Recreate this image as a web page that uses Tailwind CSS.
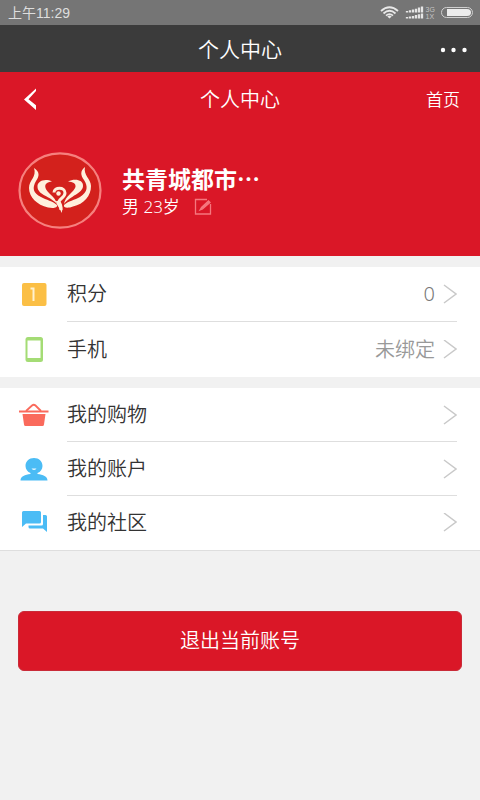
<!DOCTYPE html>
<html lang="zh-CN">
<head>
<meta charset="utf-8">
<meta name="viewport" content="width=device-width, initial-scale=1">
<title>个人中心</title>
<script src="https://cdn.jsdelivr.net/npm/@tailwindcss/browser@4"></script>
</head>
<body class="min-h-screen bg-[#f1f1f1] font-['Noto_Sans','Noto_Sans_CJK_SC',sans-serif] text-[#333]">
<div class="flex h-[25px] items-center justify-between bg-[#757575] pl-2 pr-[6px] text-[#dedede]">
  <span class="font-['Liberation_Sans','Noto_Sans_CJK_SC',sans-serif] text-sm leading-5">上午11:29</span>
  <svg class="h-4 w-[94px]" viewBox="380 5 94 16" fill="none" role="img" aria-label="Wi-Fi 3G 1X">
    <g stroke="#e8e8e8" stroke-width="1.800">
      <path d="M381 11Q389.500 3.500 398 11M383.500 13.500Q389.500 8 395.500 13.500M386 15.700Q389.500 12.500 393 15.700"/>
    </g>
    <path d="M387.300 16.500Q389.500 14.600 391.700 16.500L389.500 18.500Z" fill="#e8e8e8"/>
    <g stroke="#e6e6e6" stroke-width="2.300">
      <path d="M407 12.500V11M410 12.500V10.300M413 12.500V9.500M416 12.500V8.700M419 12.500V7.500M422 12.500V6.500M407 18.500V17M410 18.500V16.500M413 18.500V16M416 18.500V15M419 18.500V14.200M422 18.500V13.500"/>
    </g>
    <g fill="#c4c4c4" font-family="Liberation Sans, sans-serif" font-size="7"><text x="425.500" y="12">3G</text><text x="425.500" y="18.500">1X</text></g>
    <rect x="441.500" y="7.500" width="31" height="10" rx="5" stroke="#d0d0d0"/>
    <path d="M447 9H467Q471 9 471 12.500T467 16H447Z" fill="#ececec"/>
  </svg>
</div>
<header class="relative flex h-[47px] items-center justify-center bg-[#3b3b3b] text-white">
  <h1 class="text-[21px] font-[350] leading-8">个人中心</h1>
  <button type="button" aria-label="更多" class="absolute right-3 top-0 flex h-full items-center">
    <svg class="h-2 w-[28px]" viewBox="0 0 28 8" fill="#fff"><circle cx="3" cy="5" r="2.200"/><circle cx="13.500" cy="5" r="2.200"/><circle cx="24.500" cy="5" r="2.200"/></svg>
  </button>
</header>
<section class="bg-[#da1727] pb-[27px] text-white">
  <nav class="grid h-14 grid-cols-[1fr_auto_1fr] items-center px-5 font-[350]">
    <a href="#" aria-label="返回" class="justify-self-start">
      <svg class="h-6 w-5" viewBox="0 0 20 24" fill="#fff"><path d="M16 0.500L4 11.500L16 22V17.300L8.500 11.300L16 3Z"/></svg>
    </a>
    <h2 class="text-xl leading-8">个人中心</h2>
    <a href="#" class="justify-self-end text-[17px] leading-8">首页</a>
  </nav>
  <div class="flex items-center gap-5 pl-[18px] pt-6">
    <svg class="h-[77px] w-[84px] shrink-0" viewBox="0 0 84 77" role="img" aria-label="头像">
      <ellipse cx="42" cy="38.500" rx="40.500" ry="37.200" fill="#d3211c" stroke="#f6807e" stroke-width="2.200"/>
      <g fill="#fff0dc">
        <path d="M16 16C22 20 21.500 24 18 29C14 36 15 41 23 45C28 48 35 49 39 53C40 56 35 56.500 30 55.500C19 53 11 45 11 36C11 28 19 25 16 16Z"/>
        <path d="M67 15C62 19 62.500 23 66 28C70 34 70 40 62 45C57 48 50 49 46 53C45 56 50 56.500 55 54.500C66 52 73 44 73 34C73 27 65 23 67 15Z"/>
        <path d="M34 29.500C27 26 19 29 19.500 35C20 43 32 44 39 52C37 44 29 41 27.500 36C26.500 32 29 30 34 29.500Z"/>
        <path d="M50 29.500C57 26 65.500 28 65 34C65 41 52 44 46 52C47 44 56 40 57.500 35C58 31 55 30 50 29.500Z"/>
      </g>
      <path d="M36 40.500C36 35 47 34.500 47 41C47 46 40 47 41 50.500C42 53 43 55 43 58" fill="none" stroke="#fff0dc" stroke-width="3"/>
      <path d="M38 49C39 55 42 55 43.500 61C45 57 45 53 42 49Z" fill="#fff0dc"/>
      <circle cx="40.500" cy="41.500" r="2.200" fill="#fff0dc"/>
    </svg>
    <div>
      <p class="w-[138px] text-[23px] font-bold leading-8 whitespace-nowrap">共青城都市<span class="font-['Noto_Sans_CJK_SC']">⋯</span></p>
      <div class="flex items-center gap-[14px] text-[17px] leading-6 font-[350]">
        <span>男 23岁</span>
        <button type="button" aria-label="编辑资料">
          <svg class="block h-[18px] w-[18px]" viewBox="0 0 18 18" fill="none" stroke="#f5777e" stroke-width="1.300"><path d="M13 1.500H1.500V16H16.500V6"/><path d="M6 12L7.500 9.500L14.500 3L16 4.500L8.500 11Z" fill="#f5777e"/></svg>
        </button>
      </div>
    </div>
  </div>
</section>
<main class="pt-[11px]">
  <ul class="bg-white pl-5 pr-[23px] text-xl font-[350]">
    <li><a href="#" class="flex h-[55px] items-center">
      <svg class="h-7 w-7 shrink-0" viewBox="0 0 28 28"><rect x="2" y="2" width="24.500" height="23" rx="2" fill="#fbbf45"/><path d="M10.500 7.500H13.500V20" fill="none" stroke="#fff2cf" stroke-width="2"/></svg>
      <span class="ml-[19px] flex h-full flex-1 items-center border-b border-[#dedede]"><span class="flex-1">积分</span><span class="mr-2 text-[#777]">0</span><svg class="h-5 w-[14px]" viewBox="0 0 14 20" fill="none" stroke="#c9c9c9" stroke-width="1.500"><path d="M1 1L13 10L1 19"/></svg></span>
    </a></li>
    <li><a href="#" class="flex h-[55px] items-center">
      <svg class="h-7 w-7 shrink-0" viewBox="0 0 28 28"><rect x="5.500" y="1" width="17.500" height="25" rx="2.500" fill="#a4dc75"/><rect x="7.500" y="4.500" width="13" height="17.500" fill="#fff"/></svg>
      <span class="ml-[19px] flex h-full flex-1 items-center"><span class="flex-1">手机</span><span class="mr-2 text-[#999]">未绑定</span><svg class="h-5 w-[14px]" viewBox="0 0 14 20" fill="none" stroke="#c9c9c9" stroke-width="1.500"><path d="M1 0L13 9L1 18"/></svg></span>
    </a></li>
  </ul>
  <ul class="mt-[11px] border-b border-[#dedede] bg-white pl-5 pr-[23px] text-xl font-[350]">
    <li><a href="#" class="flex h-[54px] items-center">
      <svg class="h-7 w-7 shrink-0 overflow-visible" viewBox="0 0 28 28"><path d="M-1 9.500H28.500V11.500H-1Z" fill="#fa6a5c"/><path d="M6 10L12 4.500Q13.800 3 15.500 4.500L21 10" fill="none" stroke="#fa6a5c" stroke-width="1.800"/><path d="M2.500 13H25.500L24 23.500Q23.800 25 22.500 25H5.500Q4.200 25 4 23.500Z" fill="#fa6a5c"/></svg>
      <span class="ml-[19px] flex h-full flex-1 items-center border-b border-[#dedede]"><span class="flex-1">我的购物</span><svg class="h-5 w-[14px]" viewBox="0 0 14 20" fill="none" stroke="#c9c9c9" stroke-width="1.500"><path d="M1 1L13 10L1 19"/></svg></span>
    </a></li>
    <li><a href="#" class="flex h-[54px] items-center">
      <svg class="h-7 w-7 shrink-0" viewBox="0 0 28 28"><path d="M14 3C19 3 22.500 6.500 22.500 11C22.500 14 20.500 17 17.500 18V19C23 19.500 27.500 21.500 27.500 25.500H0.500C0.500 21.500 5 19.500 10.500 19V18C7.500 17 5.500 14 5.500 11C5.500 6.500 9 3 14 3Z" fill="#4bbcf5"/><path d="M11.500 13.500H16.500Q14 16.500 11.500 13.500Z" fill="#e8f7ff"/></svg>
      <span class="ml-[19px] flex h-full flex-1 items-center border-b border-[#dedede]"><span class="flex-1">我的账户</span><svg class="h-5 w-[14px]" viewBox="0 0 14 20" fill="none" stroke="#c9c9c9" stroke-width="1.500"><path d="M1 1L13 10L1 19"/></svg></span>
    </a></li>
    <li><a href="#" class="flex h-[54px] items-center">
      <svg class="h-7 w-7 shrink-0" viewBox="0 0 28 28" fill="#4bbcf5"><path d="M3.500 2H19.500Q21 2 21 3.500V13Q21 14.500 19.500 14.500H6L2 18V3.500Q2 2 3.500 2Z"/><path d="M23 6H25.500Q27 6 27 7.500V23L23 19.500H10Q8.500 19.500 8.500 18V16.500H21.500Q23 16.500 23 15Z"/></svg>
      <span class="ml-[19px] flex h-full flex-1 items-center"><span class="flex-1">我的社区</span><svg class="h-5 w-[14px]" viewBox="0 0 14 20" fill="none" stroke="#c9c9c9" stroke-width="1.500"><path d="M1 0L13 9L1 18"/></svg></span>
    </a></li>
  </ul>
  <div class="px-[18px] pt-[60px]">
    <button type="button" class="h-[60px] w-full rounded-md border border-[#c92b38] bg-[#da1727] text-xl font-[350] text-white">退出当前账号</button>
  </div>
</main>
</body>
</html>
